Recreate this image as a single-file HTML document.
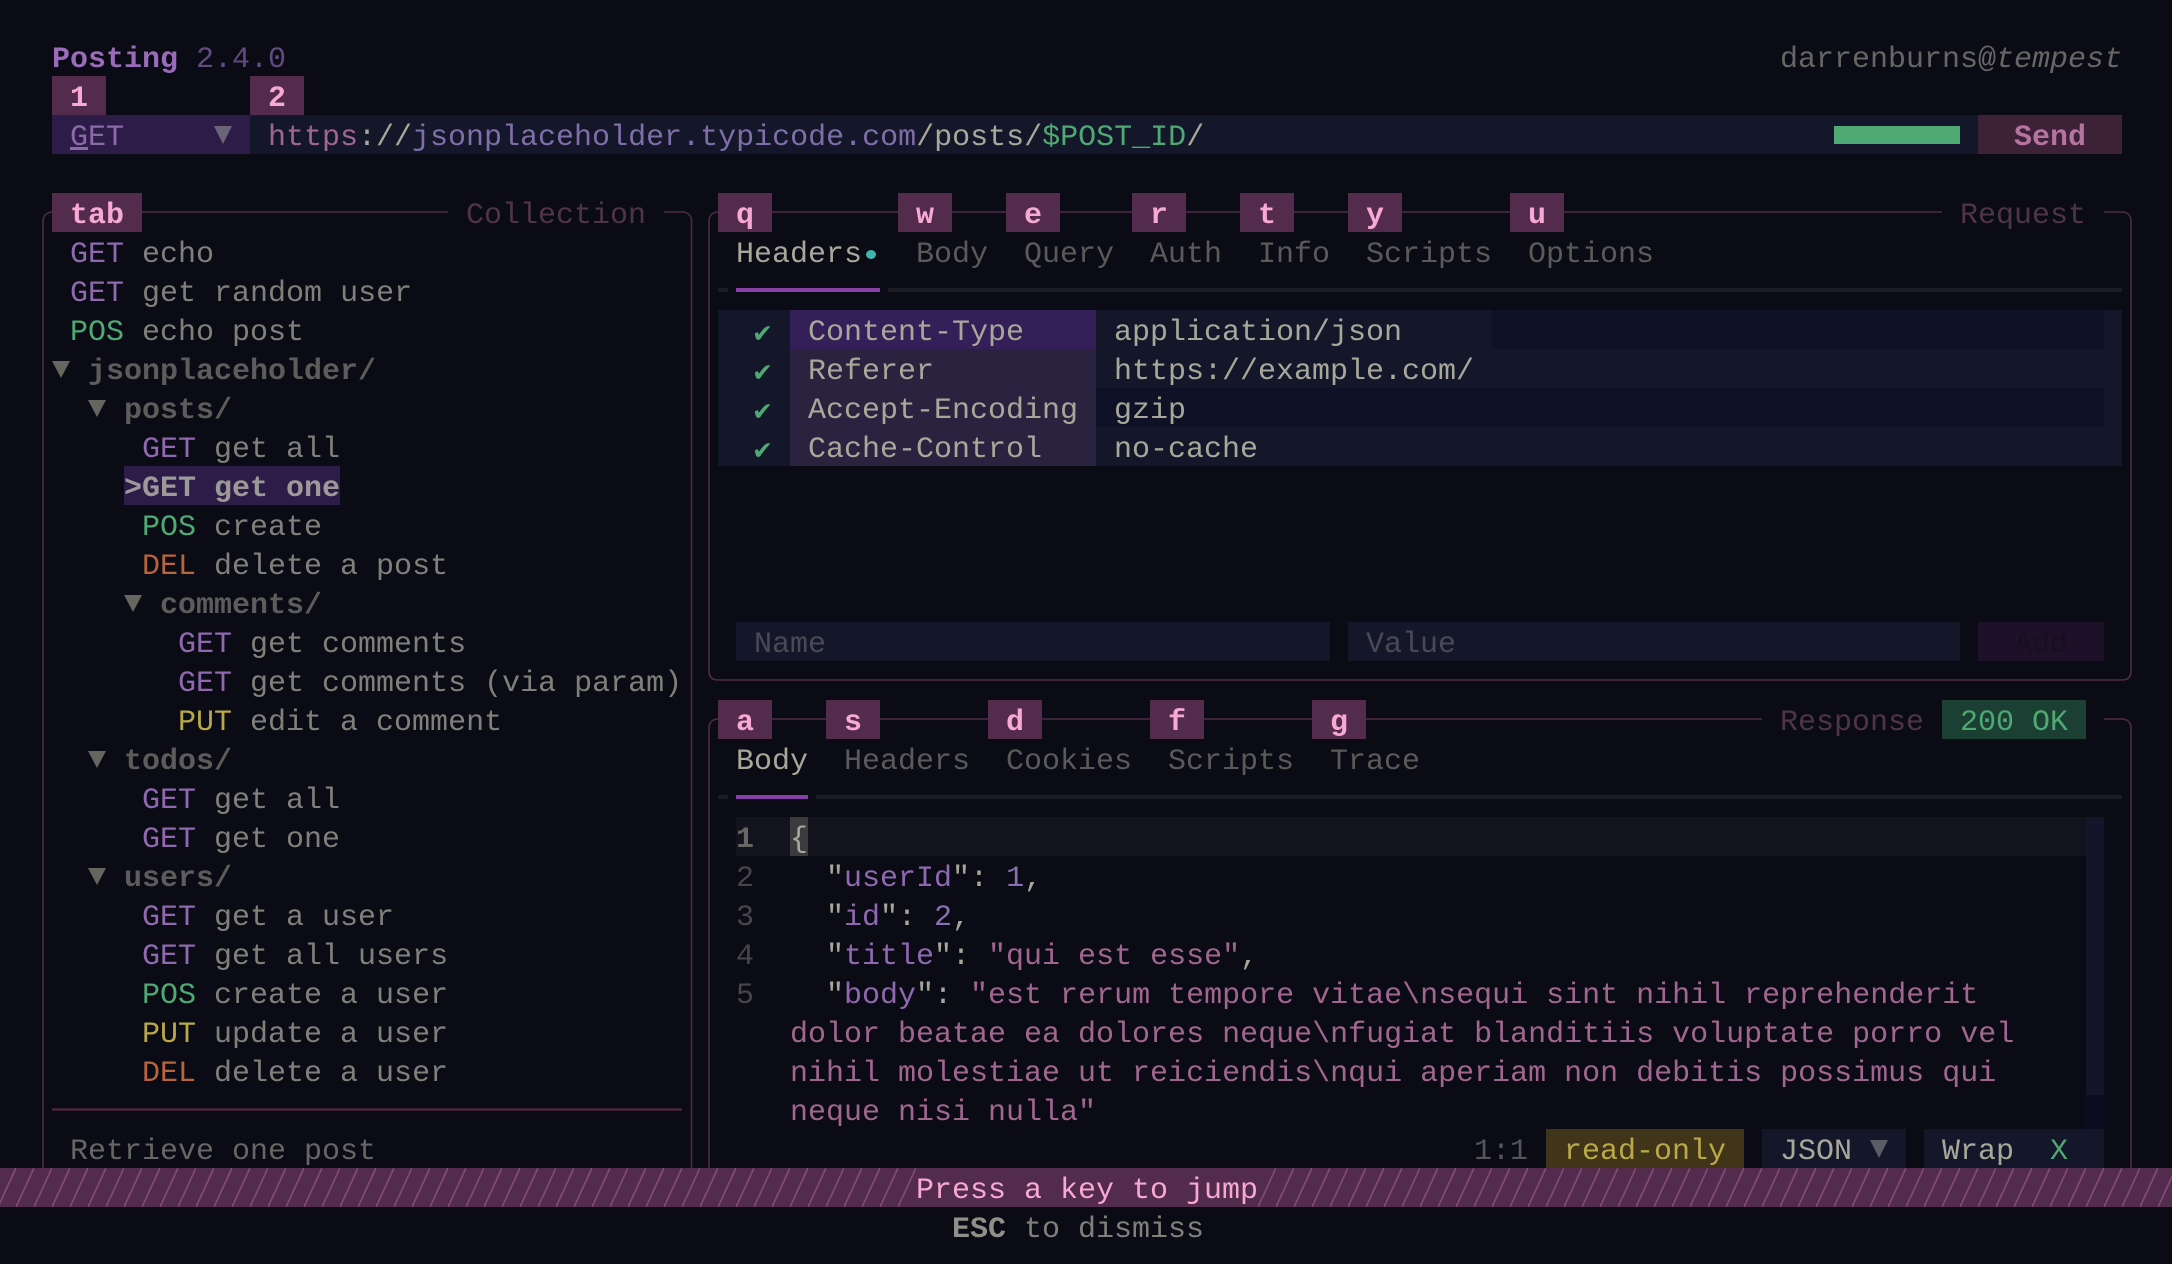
<!DOCTYPE html>
<html><head><meta charset="utf-8"><title>Posting</title>
<style>
html,body{margin:0;padding:0;width:2172px;height:1264px;overflow:hidden;background:#0a0b14}
body{position:relative;font-family:"Liberation Mono",monospace;font-size:30px;color:#a8a89a}
.t{position:absolute;left:calc(16px + var(--c)*18px);top:calc(41px + var(--r)*39px);line-height:39px;height:39px;white-space:pre}
.b{position:absolute;left:calc(16px + var(--c)*18px);top:calc(37px + var(--r)*39px);width:calc(var(--w)*18px);height:39px}
.k{background:#532b4d}
.kt{font-weight:bold;color:#f7a8d3}
.tri{position:absolute;left:calc(16px + var(--c)*18px);top:calc(37px + var(--r)*39px + 12px);width:18px;height:17px;clip-path:polygon(0 0,100% 0,50% 100%);background:#666660}
.get{color:#8f68b0}.pos{color:#4fa972}.put{color:#b8a84a}.del{color:#b8653d}
.n{color:#80807a}
.f{font-weight:bold;color:#5c5c5a}
.title{color:#4f3449}
.tab{color:#5a5a58}.act{color:#a8a89a}
.c{font-family:"DejaVu Sans",sans-serif;font-size:25px;color:#4fa972;margin-left:-2px}
.ln{color:#464648}
.s{color:#a0668f}.p{color:#a8a89a}.key{color:#8f68b0}.num{color:#8a70b0}
.u{position:absolute;height:4px}
svg{position:absolute;left:0;top:0}
</style></head><body>
<svg width="2172" height="1264" fill="none" stroke="#4d2b48" stroke-width="1.6">
<path d="M52 212H52.5C47 212 43 216 43 221V1168"/>
<path d="M142 212H448"/><path d="M664 212H682.5C688 212 691.5 216 691.5 221V1168"/>
<path d="M718 212C712 212 709 216 709 221V671C709 677 712 680 718 680H2122C2128 680 2131 677 2131 671V221C2131 216 2128 212 2122 212H2104"/>
<path d="M718 212H1942"/>
<path d="M718 719C712 719 709 723 709 728V1168"/>
<path d="M718 719H1762"/><path d="M2104 719H2122C2128 719 2131 723 2131 728V1168"/>
<path d="M52 1109.5H682" stroke-width="2.4" stroke="#47263f"/>
</svg>

<div class="t" style="--c:2;--r:0;font-weight:bold;color:#9a6bb8">Posting</div>
<div class="t" style="--c:10;--r:0;color:#624a80">2.4.0</div>
<div class="t" style="--c:98;--r:0;color:#666664">darrenburns@<span style="font-style:italic">tempest</span></div>

<div class="b k" style="--c:2;--r:1;--w:3"></div><div class="t kt" style="--c:3;--r:1">1</div>
<div class="b k" style="--c:13;--r:1;--w:3"></div><div class="t kt" style="--c:14;--r:1">2</div>

<div class="b" style="--c:2;--r:2;--w:11;background:#2e1c48"></div>
<div class="t" style="--c:3;--r:2;color:#8a6aa8"><span style="text-decoration:underline">G</span>ET</div>
<div class="tri" style="--c:11;--r:2;top:126px;height:18px;background:#6b6478"></div>
<div class="b" style="--c:13;--r:2;--w:96;background:#14162a"></div>
<div class="t" style="--c:14;--r:2"><span style="color:#a0668f">https</span><span style="color:#a8a89a">://</span><span style="color:#7f6ea8">jsonplaceholder.typicode.com</span><span style="color:#a8a89a">/posts/</span><span style="color:#4fa972">$POST_ID</span><span style="color:#a8a89a">/</span></div>
<div style="position:absolute;left:1834px;top:126px;width:126px;height:18px;background:#4fa972"></div>
<div class="b" style="--c:109;--r:2;--w:8;background:#3d2136"></div>
<div class="t" style="--c:111;--r:2;font-weight:bold;color:#b4749f">Send</div>

<div class="b k" style="--c:2;--r:4;--w:5"></div><div class="t kt" style="--c:3;--r:4">tab</div>
<div class="t title" style="--c:25;--r:4">Collection</div>

<div class="t" style="--c:3;--r:5"><span class="get">GET</span> <span class="n">echo</span></div>
<div class="t" style="--c:3;--r:6"><span class="get">GET</span> <span class="n">get random user</span></div>
<div class="t" style="--c:3;--r:7"><span class="pos">POS</span> <span class="n">echo post</span></div>
<div class="tri" style="--c:2;--r:8"></div><div class="t f" style="--c:4;--r:8">jsonplaceholder/</div>
<div class="tri" style="--c:4;--r:9"></div><div class="t f" style="--c:6;--r:9">posts/</div>
<div class="t" style="--c:7;--r:10"><span class="get">GET</span> <span class="n">get all</span></div>
<div class="b" style="--c:6;--r:11;--w:12;background:#2e1c48"></div>
<div class="t" style="--c:6;--r:11;font-weight:bold;color:#9c9a98">&gt;GET get one</div>
<div class="t" style="--c:7;--r:12"><span class="pos">POS</span> <span class="n">create</span></div>
<div class="t" style="--c:7;--r:13"><span class="del">DEL</span> <span class="n">delete a post</span></div>
<div class="tri" style="--c:6;--r:14"></div><div class="t f" style="--c:8;--r:14">comments/</div>
<div class="t" style="--c:9;--r:15"><span class="get">GET</span> <span class="n">get comments</span></div>
<div class="t" style="--c:9;--r:16"><span class="get">GET</span> <span class="n">get comments (via param)</span></div>
<div class="t" style="--c:9;--r:17"><span class="put">PUT</span> <span class="n">edit a comment</span></div>
<div class="tri" style="--c:4;--r:18"></div><div class="t f" style="--c:6;--r:18">todos/</div>
<div class="t" style="--c:7;--r:19"><span class="get">GET</span> <span class="n">get all</span></div>
<div class="t" style="--c:7;--r:20"><span class="get">GET</span> <span class="n">get one</span></div>
<div class="tri" style="--c:4;--r:21"></div><div class="t f" style="--c:6;--r:21">users/</div>
<div class="t" style="--c:7;--r:22"><span class="get">GET</span> <span class="n">get a user</span></div>
<div class="t" style="--c:7;--r:23"><span class="get">GET</span> <span class="n">get all users</span></div>
<div class="t" style="--c:7;--r:24"><span class="pos">POS</span> <span class="n">create a user</span></div>
<div class="t" style="--c:7;--r:25"><span class="put">PUT</span> <span class="n">update a user</span></div>
<div class="t" style="--c:7;--r:26"><span class="del">DEL</span> <span class="n">delete a user</span></div>
<div class="t" style="--c:3;--r:28;color:#666664">Retrieve one post</div>

<div class="b k" style="--c:39;--r:4;--w:3"></div><div class="t kt" style="--c:40;--r:4">q</div>
<div class="b k" style="--c:49;--r:4;--w:3"></div><div class="t kt" style="--c:50;--r:4">w</div>
<div class="b k" style="--c:55;--r:4;--w:3"></div><div class="t kt" style="--c:56;--r:4">e</div>
<div class="b k" style="--c:62;--r:4;--w:3"></div><div class="t kt" style="--c:63;--r:4">r</div>
<div class="b k" style="--c:68;--r:4;--w:3"></div><div class="t kt" style="--c:69;--r:4">t</div>
<div class="b k" style="--c:74;--r:4;--w:3"></div><div class="t kt" style="--c:75;--r:4">y</div>
<div class="b k" style="--c:83;--r:4;--w:3"></div><div class="t kt" style="--c:84;--r:4">u</div>
<div class="t title" style="--c:108;--r:4">Request</div>

<div class="t act" style="--c:40;--r:5">Headers</div>
<div style="position:absolute;left:866px;top:250px;width:10px;height:9px;border-radius:50%;background:#3fb5ae"></div>
<div class="t tab" style="--c:50;--r:5">Body</div>
<div class="t tab" style="--c:56;--r:5">Query</div>
<div class="t tab" style="--c:63;--r:5">Auth</div>
<div class="t tab" style="--c:69;--r:5">Info</div>
<div class="t tab" style="--c:75;--r:5">Scripts</div>
<div class="t tab" style="--c:84;--r:5">Options</div>
<div class="u" style="left:718px;top:288px;width:10px;background:#1b1b23"></div>
<div class="u" style="left:736px;top:288px;width:144px;background:#8640a8"></div>
<div class="u" style="left:888px;top:288px;width:1234px;background:#1b1b23"></div>

<div style="position:absolute;left:718px;top:310px;width:1404px;height:156px;background:#14172a"></div>
<div style="position:absolute;left:1492px;top:310px;width:612px;height:39px;background:#0f1126"></div>
<div style="position:absolute;left:1096px;top:388px;width:1008px;height:39px;background:#0f1126"></div>
<div class="b" style="--c:43;--r:7;--w:17;background:#341f58"></div>
<div style="position:absolute;left:790px;top:349px;width:306px;height:117px;background:#2a2340"></div>
<div class="t c" style="--c:41;--r:7">✔</div><div class="t" style="--c:44;--r:7">Content-Type</div><div class="t" style="--c:61;--r:7">application/json</div>
<div class="t c" style="--c:41;--r:8">✔</div><div class="t" style="--c:44;--r:8">Referer</div><div class="t" style="--c:61;--r:8">https://example.com/</div>
<div class="t c" style="--c:41;--r:9">✔</div><div class="t" style="--c:44;--r:9">Accept-Encoding</div><div class="t" style="--c:61;--r:9">gzip</div>
<div class="t c" style="--c:41;--r:10">✔</div><div class="t" style="--c:44;--r:10">Cache-Control</div><div class="t" style="--c:61;--r:10">no-cache</div>

<div class="b" style="--c:40;--r:15;--w:33;background:#14162a"></div><div class="t" style="--c:41;--r:15;color:#4a4a55">Name</div>
<div class="b" style="--c:74;--r:15;--w:34;background:#14162a"></div><div class="t" style="--c:75;--r:15;color:#4a4a55">Value</div>
<div class="b" style="--c:109;--r:15;--w:7;background:#1e1029"></div><div class="t" style="--c:111;--r:15;color:#15101f">Add</div>

<div class="b k" style="--c:39;--r:17;--w:3"></div><div class="t kt" style="--c:40;--r:17">a</div>
<div class="b k" style="--c:45;--r:17;--w:3"></div><div class="t kt" style="--c:46;--r:17">s</div>
<div class="b k" style="--c:54;--r:17;--w:3"></div><div class="t kt" style="--c:55;--r:17">d</div>
<div class="b k" style="--c:63;--r:17;--w:3"></div><div class="t kt" style="--c:64;--r:17">f</div>
<div class="b k" style="--c:72;--r:17;--w:3"></div><div class="t kt" style="--c:73;--r:17">g</div>
<div class="t title" style="--c:98;--r:17">Response</div>
<div class="b" style="--c:107;--r:17;--w:8;background:#1c3f33"></div><div class="t" style="--c:108;--r:17;color:#4fa972">200 OK</div>

<div class="t act" style="--c:40;--r:18">Body</div>
<div class="t tab" style="--c:46;--r:18">Headers</div>
<div class="t tab" style="--c:55;--r:18">Cookies</div>
<div class="t tab" style="--c:64;--r:18">Scripts</div>
<div class="t tab" style="--c:73;--r:18">Trace</div>
<div class="u" style="left:718px;top:795px;width:10px;background:#1b1b23"></div>
<div class="u" style="left:736px;top:795px;width:72px;background:#8640a8"></div>
<div class="u" style="left:816px;top:795px;width:1306px;background:#1b1b23"></div>

<div class="b" style="--c:40;--r:20;--w:75;background:#12131c"></div>
<div class="b" style="--c:43;--r:20;--w:1;background:#3a3a3f"></div>
<div style="position:absolute;left:2086px;top:817px;width:18px;height:278px;background:#14152a"></div>
<div style="position:absolute;left:2086px;top:1095px;width:18px;height:34px;background:#0b0c22"></div>
<div class="t" style="--c:40;--r:20;font-weight:bold;color:#666664">1</div><div class="t p" style="--c:43;--r:20">{</div>
<div class="t ln" style="--c:40;--r:21">2</div><div class="t" style="--c:45;--r:21"><span class="p">"</span><span class="key">userId</span><span class="p">": </span><span class="num">1</span><span class="p">,</span></div>
<div class="t ln" style="--c:40;--r:22">3</div><div class="t" style="--c:45;--r:22"><span class="p">"</span><span class="key">id</span><span class="p">": </span><span class="num">2</span><span class="p">,</span></div>
<div class="t ln" style="--c:40;--r:23">4</div><div class="t" style="--c:45;--r:23"><span class="p">"</span><span class="key">title</span><span class="p">": </span><span class="s">"qui est esse"</span><span class="p">,</span></div>
<div class="t ln" style="--c:40;--r:24">5</div><div class="t" style="--c:45;--r:24"><span class="p">"</span><span class="key">body</span><span class="p">": </span><span class="s">"est rerum tempore vitae\nsequi sint nihil reprehenderit</span></div>
<div class="t s" style="--c:43;--r:25">dolor beatae ea dolores neque\nfugiat blanditiis voluptate porro vel</div>
<div class="t s" style="--c:43;--r:26">nihil molestiae ut reiciendis\nqui aperiam non debitis possimus qui</div>
<div class="t s" style="--c:43;--r:27">neque nisi nulla"</div>

<div class="t" style="--c:81;--r:28;color:#56565a">1:1</div>
<div class="b" style="--c:85;--r:28;--w:11;background:#403518"></div><div class="t" style="--c:86;--r:28;color:#b9a94a">read-only</div>
<div class="b" style="--c:97;--r:28;--w:8;background:#14162a"></div><div class="t" style="--c:98;--r:28">JSON</div>
<div class="tri" style="--c:103;--r:28;top:1140px;height:18px;background:#5c5c66"></div>
<div class="b" style="--c:106;--r:28;--w:10;background:#14162a"></div><div class="t" style="--c:107;--r:28">Wrap</div><div class="t" style="--c:113;--r:28;color:#4fa972">X</div>

<svg width="2172" height="39" style="top:1168px" stroke="#824a77" stroke-width="1.7">
<defs><pattern id="st" x="16" y="0" width="18" height="39" patternUnits="userSpaceOnUse"><rect width="18" height="39" fill="#532b4d" stroke="none"/><path d="M0 39L18 0"/></pattern></defs>
<rect width="2172" height="39" fill="url(#st)" stroke="none"/>
</svg>
<div class="b k" style="--c:50;--r:29;--w:19"></div>
<div class="t" style="--c:50;--r:29;color:#f7a8d3">Press a key to jump</div>
<div class="t" style="--c:52;--r:30;color:#80807a"><span style="font-weight:bold;color:#90908a">ESC</span> to dismiss</div>
</body></html>
